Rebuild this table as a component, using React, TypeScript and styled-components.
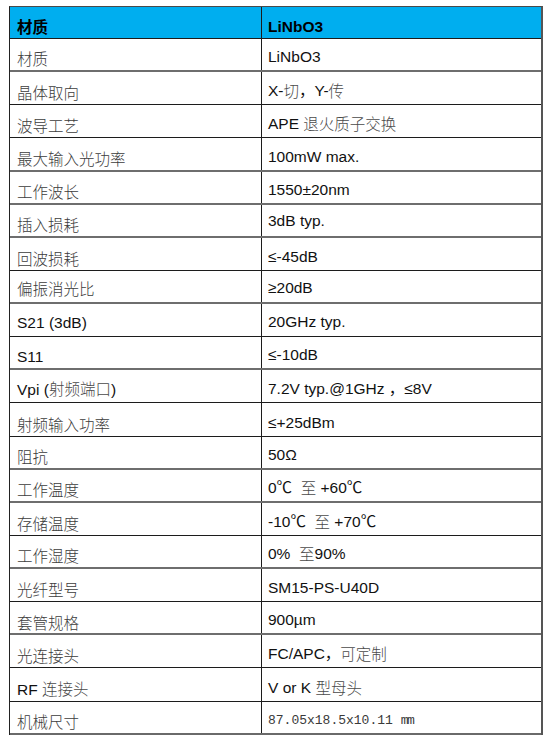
import React from "react";
import styled, { createGlobalStyle, css } from "styled-components";

const Global = createGlobalStyle`
  html, body { margin: 0; padding: 0; background: #ffffff; }
  body { font-family: "Liberation Sans", "Noto Sans CJK SC", sans-serif; }
`;

const Page = styled.div`
  padding: 6px 0 0 9px;
`;

const Table = styled.div`
  width: 534px;
  box-sizing: border-box;
  border-top: 1px solid #4a4a4a;
  border-left: 1px solid #222;
  border-right: 2px solid #555;
  display: flex;
  flex-direction: column;
`;

const Row = styled.div<{ $head?: boolean; $soft?: boolean; $last?: boolean }>`
  display: grid;
  grid-template-columns: 251px 1fr;
  height: 33.14px;
  box-sizing: border-box;
  border-bottom: 1px solid #1c1c1c;
  ${(p) =>
    p.$soft &&
    css`
      border-bottom: 2px solid #6e6e6e;
    `}
  ${(p) =>
    p.$last &&
    css`
      border-bottom: 2px solid #6a6a6a;
    `}
  ${(p) =>
    p.$head &&
    css`
      height: 32px;
      background: #00aeef;
    `}
`;

const Cell = styled.div<{ $right?: boolean; $pb: number; $head?: boolean }>`
  display: flex;
  align-items: flex-end;
  box-sizing: border-box;
  padding-left: ${(p) => (p.$right ? 6 : 7)}px;
  padding-bottom: ${(p) => p.$pb}px;
  font-size: 15.5px;
  line-height: 1;
  white-space: pre;
  color: ${(p) => (p.$head ? "#000" : p.$right ? "#111" : "#3c3c3c")};
  font-weight: ${(p) => (p.$head ? 700 : 400)};
  ${(p) =>
    p.$right &&
    css`
      border-left: 1px solid #1c1c1c;
    `}
`;

const Han = styled.span`
  color: #4a4a4a;
  font-family: "Noto Sans CJK SC", sans-serif;
  font-weight: 300;
`;

const Label = styled.span<{ $latin?: boolean }>`
  font-weight: 300;
  color: #3c3c3c;
  ${(p) =>
    p.$latin &&
    css`
      color: #111;
      font-weight: 400;
    `}
`;

const Mono = styled.span`
  font-family: "Liberation Mono", monospace;
  font-size: 13px;
  color: #3a3a3a;
`;

const Mm = styled.span`
  font-family: "Liberation Mono", monospace;
  font-size: 13px;
  letter-spacing: -1.5px;
  color: #3a3a3a;
`;

type R = {
  label: React.ReactNode;
  value: React.ReactNode;
  soft?: boolean;
  lpb?: number;
  rpb?: number;
};

const rows: R[] = [
  { label: <Label>材质</Label>, value: "LiNbO3", soft: true },
  {
    label: <Label>晶体取向</Label>,
    value: (
      <>
        X-<Han>切</Han>，Y-<Han>传</Han>
      </>
    ),
  },
  {
    label: <Label>波导工艺</Label>,
    value: (
      <>
        APE <Han>退火质子交换</Han>
      </>
    ),
  },
  { label: <Label>最大输入光功率</Label>, value: "100mW max.", soft: true },
  { label: <Label>工作波长</Label>, value: "1550±20nm", soft: true },
  { label: <Label>插入损耗</Label>, value: "3dB typ.", soft: true, rpb: 7 },
  { label: <Label>回波损耗</Label>, value: "≤-45dB" },
  { label: <Label>偏振消光比</Label>, value: "≥20dB", soft: true, lpb: 4.5, rpb: 7 },
  { label: <Label $latin>S21 (3dB)</Label>, value: "20GHz typ.", lpb: 6, rpb: 7 },
  { label: <Label $latin>S11</Label>, value: "≤-10dB", soft: true, lpb: 4 },
  {
    label: (
      <Label $latin>
        Vpi (<Han>射频端口</Han>)
      </Label>
    ),
    value: "7.2V typ.@1GHz ，≤8V",
    lpb: 5,
  },
  { label: <Label>射频输入功率</Label>, value: "≤+25dBm", lpb: 2 },
  { label: <Label>阻抗</Label>, value: "50Ω", soft: true },
  {
    label: <Label>工作温度</Label>,
    value: (
      <>
        0℃  <Han>至</Han> +60℃
      </>
    ),
    soft: true,
  },
  {
    label: <Label>存储温度</Label>,
    value: (
      <>
        -10℃  <Han>至</Han> +70℃
      </>
    ),
  },
  {
    label: <Label>工作湿度</Label>,
    value: (
      <>
        0%  <Han>至</Han>90%
      </>
    ),
    soft: true,
  },
  { label: <Label>光纤型号</Label>, value: "SM15-PS-U40D" },
  { label: <Label>套管规格</Label>, value: "900µm", soft: true, lpb: 2 },
  {
    label: <Label>光连接头</Label>,
    value: (
      <>
        FC/APC，<Han>可定制</Han>
      </>
    ),
  },
  {
    label: (
      <Label $latin>
        RF <Han>连接头</Han>
      </Label>
    ),
    value: (
      <>
        V or K <Han>型母头</Han>
      </>
    ),
    lpb: 3.5,
  },
  {
    label: <Label>机械尺寸</Label>,
    value: (
      <>
        <Mono>87.05x18.5x10.11 </Mono>
        <Mm>mm</Mm>
      </>
    ),
    rpb: 6,
  },
];

export default function App() {
  return (
    <>
      <Global />
      <Page>
        <Table>
          <Row $head>
            <Cell $head $pb={3}>
              材质
            </Cell>
            <Cell $head $right $pb={4}>
              LiNbO3
            </Cell>
          </Row>
          {rows.map((r, i) => (
            <Row key={i} $soft={r.soft} $last={i === rows.length - 1}>
              <Cell $pb={r.lpb ?? 2.5}>{r.label}</Cell>
              <Cell $right $pb={r.rpb ?? 5.5}>
                {r.value}
              </Cell>
            </Row>
          ))}
        </Table>
      </Page>
    </>
  );
}
